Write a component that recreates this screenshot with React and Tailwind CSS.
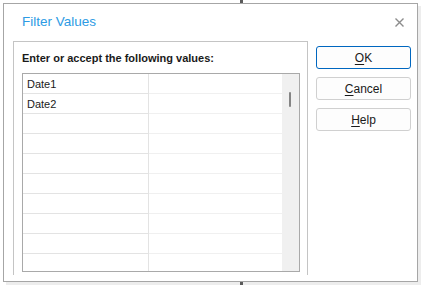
const rows = ['Date1', 'Date2', '', '', '', '', '', '', '', '', '']

function DialogButton({ primary, accessKey, rest }) {
  return (
    <button
      type="button"
      className={
        'flex h-[23px] w-[95px] items-center justify-center rounded-[3px] border text-[12px] text-[#1a1a1a] ' +
        (primary ? 'border-[#0067c0] bg-[#fdfdfd]' : 'border-[#d0d0d0] bg-[#fdfdfd]')
      }
    >
      <span className="underline underline-offset-2">{accessKey}</span>
      {rest}
    </button>
  )
}

function ValuesGrid() {
  return (
    <div className="flex h-[199px] w-[278px] overflow-hidden border border-[#a9a9a9] bg-white">
      <div className="flex w-[260px] flex-col">
        {rows.map((value, i) => (
          <div key={i} className="flex h-[20px] shrink-0">
            <div className="flex w-[126px] items-center border-b border-r border-b-[#e3e3e3] border-r-[#e3e3e3] pl-[4px] pt-[1px] text-[11px] text-[#1a1a1a]">
              {value}
            </div>
            <div className="flex-1 border-b border-[#f0f0f0]" />
          </div>
        ))}
      </div>
      <div className="w-[17px] bg-[#f0f0f0] pl-[7px] pt-[18px]">
        <div className="h-[15px] w-[2px] rounded-full bg-[#858585]" />
      </div>
    </div>
  )
}

export default function App() {
  return (
    <div
      className="relative h-[285px] w-[421px] overflow-hidden bg-white"
      style={{ fontFamily: '"Liberation Sans", Arial, sans-serif' }}
    >
      <div className="absolute left-[240px] top-0 h-[3px] w-[3px] bg-[#5a5a5a]" />
      <div className="absolute left-[240px] top-[282px] h-[3px] w-[3px] bg-[#5a5a5a]" />
      <div className="ml-[3px] mt-[3px] flex h-[279px] w-[415px] flex-col border border-[#a6a6a6] bg-white shadow-[3px_3px_0_#ededed]">
        <div className="flex h-[37px] shrink-0 items-center justify-between pl-[18px] pr-[13px]">
          <span className="text-[13.5px] text-[#2d9be4]">Filter Values</span>
          <svg width="9" height="9" viewBox="0 0 9 9" className="mb-[1px]">
            <path d="M0.5 0.5L8.5 8.5M8.5 0.5L0.5 8.5" stroke="#8c8c8c" strokeWidth="1.4" />
          </svg>
        </div>
        <div className="flex min-h-0 flex-1 pl-[9px]">
          <div className="h-[234px] w-[295px] border-l border-r border-t border-[#c4c4c4] pl-[8px]">
            <div className="flex h-[31px] items-center pt-[2px] text-[11px] font-bold text-[#1a1a1a]">
              Enter or accept the following values:
            </div>
            <ValuesGrid />
          </div>
          <div className="ml-[8px] mt-[5px] flex flex-col gap-[8px]">
            <DialogButton primary accessKey="O" rest="K" />
            <DialogButton accessKey="C" rest="ancel" />
            <DialogButton accessKey="H" rest="elp" />
          </div>
        </div>
      </div>
    </div>
  )
}
